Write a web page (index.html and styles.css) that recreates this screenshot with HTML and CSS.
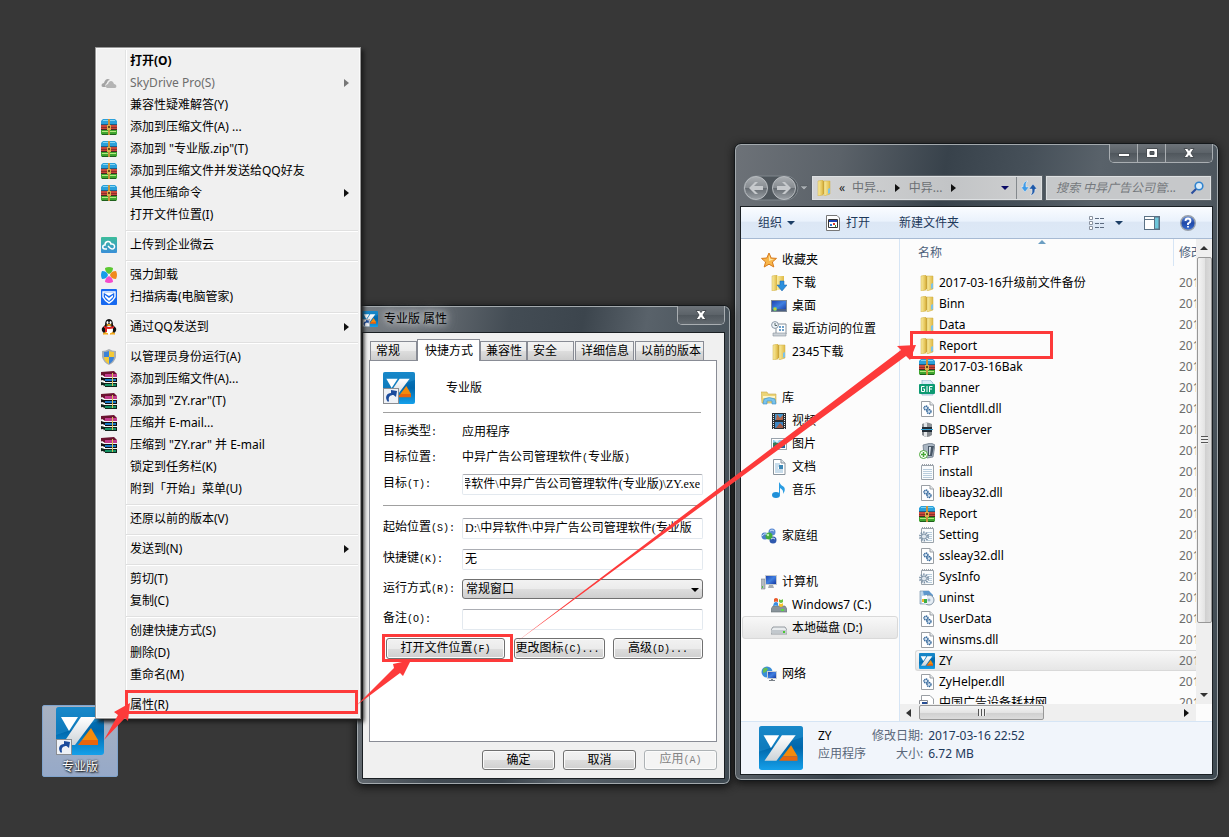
FILE: index.html
```html
<!DOCTYPE html>
<html lang="zh-CN">
<head>
<meta charset="utf-8">
<title>专业版 属性</title>
<link rel="stylesheet" href="styles.css">
</head>
<body>
<svg class="defs" aria-hidden="true">
  <defs>
    <linearGradient id="gZy" x1="0" y1="0" x2="0" y2="1"><stop offset="0" stop-color="#0d7cc0"/><stop offset=".5" stop-color="#0067ab"/><stop offset="1" stop-color="#15a0ea"/></linearGradient>
    <linearGradient id="gWhite" x1="0" y1="0" x2="0" y2="1"><stop offset="0" stop-color="#fff"/><stop offset="1" stop-color="#cdd3d8"/></linearGradient>
    <linearGradient id="gFold" x1="0" y1="0" x2="1" y2="0"><stop offset="0" stop-color="#faeda0"/><stop offset="1" stop-color="#dfb945"/></linearGradient>
    <linearGradient id="gOrb" x1="0" y1="0" x2="0" y2="1"><stop offset="0" stop-color="#a9adb1"/><stop offset=".48" stop-color="#888d92"/><stop offset=".52" stop-color="#666c72"/><stop offset="1" stop-color="#9ca1a6"/></linearGradient>
    <linearGradient id="gScreen" x1="0" y1="0" x2="1" y2="1"><stop offset="0" stop-color="#1c3fae"/><stop offset=".5" stop-color="#3f7fe0"/><stop offset="1" stop-color="#12319a"/></linearGradient>
    <linearGradient id="gHelp" x1="0" y1="0" x2="0" y2="1"><stop offset="0" stop-color="#6b93df"/><stop offset=".5" stop-color="#1f48a8"/><stop offset="1" stop-color="#3a6fd0"/></linearGradient>
    <linearGradient id="gCloud" x1="0" y1="0" x2="0" y2="1"><stop offset="0" stop-color="#3dbd9b"/><stop offset="1" stop-color="#3a8fd8"/></linearGradient>
  </defs>
  <symbol id="zy" viewBox="0 0 48 48">
    <rect width="48" height="48" rx="3" fill="url(#gZy)"/>
    <path d="M0 28Q24 20 48 12V3Q48 0 45 0H3Q0 0 0 3Z" fill="#2fa0dc" opacity=".35"/>
    <path d="M5 10H22L13 24Z" fill="#fff"/><path d="M25 10H40L19 38H6Z" fill="url(#gWhite)"/>
    <path d="M35 21L42 33H26Z" fill="#f48a0c"/><path d="M26 33H42V38H22Z" fill="#e8650d"/>
  </symbol>
  <symbol id="shortcut" viewBox="0 0 16 16"><rect x=".5" y=".5" width="15" height="15" fill="#eef1f6" stroke="#8a8d92"/><path d="M5 14C1 9 4 5 8 5V2L14 3L13 9L10.500 7C7 7 5 9 6 13Z" fill="#1b4b9c"/></symbol>
  <symbol id="zip" viewBox="0 0 16 16">
    <path d="M2 0H14L16 2V6H0V2Z" fill="#2aa0da"/><path d="M2 1H14V2H2Z" fill="#7fd4f4"/><path d="M0 5H16V6H0Z" fill="#1d5f86"/>
    <path d="M0 6H16V10H0Z" fill="#c9473a"/><path d="M0 8H16V9H0Z" fill="#8f2f2a"/><path d="M0 10H16V11H0Z" fill="#4a2a22"/>
    <path d="M0 11H16V15L15 16H1L0 15Z" fill="#3fa52f"/><path d="M1 12H15V13H1Z" fill="#b4ea80"/><path d="M1 15H15V16H1Z" fill="#1f5f1d"/>
    <path d="M7 0H9V16H7Z" fill="#c8933c"/><path d="M6 6H10V11H6Z" fill="#ddb04c"/><path d="M7 7H9V9H7Z" fill="#6a4a18"/>
  </symbol>
  <symbol id="rar" viewBox="0 0 16 16">
    <path d="M0 1L13 0L16 3V5L3 6L0 4Z" fill="#6b1330"/><path d="M4 3H16V6H4Z" fill="#c23b8c"/><path d="M0 6L4 7H16V11H4L0 9Z" fill="#111"/><path d="M4 8H15V10H4Z" fill="#1877c4"/><path d="M0 11L4 12H16V16H4L0 14Z" fill="#10231b"/><path d="M4 13H15V15H4Z" fill="#159264"/><path d="M1 4L4 6V7L1 6ZM1 9L4 10V12L1 10ZM1 14L4 15V16L1 15Z" fill="#fff"/><path d="M11 2H12V15H11Z" fill="#d7c057"/>
  </symbol>
  <symbol id="clouds" viewBox="0 0 16 16"><path d="M2 12C0 12 0 8 3 8C4 4 7 3 9 5C7 5 6 7 6 8C4 9 4 11 5 12Z" fill="#a3a3a3"/><path d="M6 13C4 12 5 9 7 9C8 5 12 5 13 9C16 9 16 13 14 13Z" fill="#b4b4b4"/></symbol>
  <symbol id="weiyun" viewBox="0 0 16 16"><rect width="16" height="16" rx="1" fill="url(#gCloud)"/><path d="M6 12H4C1 12 1 8 4 8C4 4 9 3 10 7C14 6 15 12 11 12C9 12 8 10 7 9" fill="none" stroke="#fff" stroke-width="1.500"/></symbol>
  <symbol id="clover" viewBox="0 0 16 16"><path d="M4 1Q8-1 12 1Q12 5 8 7Q4 5 4 1Z" fill="#5cc832"/><path d="M1 4Q-1 8 1 12Q6 12 7 8Q6 4 1 4Z" fill="#179de8"/><path d="M15 4Q17 8 15 12Q10 12 9 8Q10 4 15 4Z" fill="#f08a1d"/><path d="M4 15Q8 17 12 15Q12 11 8 9Q4 11 4 15Z" fill="#f34bcb"/></symbol>
  <symbol id="guard" viewBox="0 0 16 16"><rect width="16" height="16" rx="1" fill="#1769f0"/><path d="M2 3H14V8Q12 12 8 14Q4 12 2 8Z" fill="none" stroke="#fff" stroke-width="1.400"/><path d="M3 4H13L8 7Z" fill="#fff"/><path d="M4 6L8 9L12 6V8L8 12L4 8Z" fill="#fff"/></symbol>
  <symbol id="qq" viewBox="0 0 16 16"><path d="M3 14Q0 12 1 9L4 6Q4 0 8 0Q12 0 12 6L15 9Q16 12 13 14Z" fill="#111"/><ellipse cx="8" cy="11" rx="4" ry="4" fill="#fff"/><path d="M3 7Q8 9 13 7V9Q8 11 3 9Z" fill="#e02020"/><path d="M4 9H6V13H4Z" fill="#e02020"/><ellipse cx="6.500" cy="3.500" rx="1" ry="1.500" fill="#fff"/><ellipse cx="9.500" cy="3.500" rx="1" ry="1.500" fill="#fff"/><path d="M5 6Q8 4 11 6Q8 8 5 6Z" fill="#f5a91b"/><path d="M2 15Q4 12 7 15ZM9 15Q12 12 14 15Z" fill="#f5a91b" stroke="#f5a91b"/></symbol>
  <symbol id="uac" viewBox="0 0 16 16"><path d="M8 0Q11 2 15 2V8Q14 13 8 16Q2 13 1 8V2Q5 2 8 0Z" fill="#a8adb2"/><path d="M8 2V8H3V3Q6 3 8 2Z" fill="#3c82d8"/><path d="M8 2V8H13V3Q10 3 8 2Z" fill="#f4c935"/><path d="M8 8V15Q3 12 3 8Z" fill="#f4c935"/><path d="M8 8V15Q13 12 13 8Z" fill="#3c82d8"/></symbol>
  <symbol id="folder" viewBox="0 0 16 16"><path d="M2 1L7 0V15L2 16Z" fill="url(#gFold)" stroke="#cfae45" stroke-width=".5"/><path d="M7 1H11V14H7Z" fill="#c9a238"/><path d="M8 1L14 1V14L8 16Z" fill="url(#gFold)" stroke="#cfae45" stroke-width=".5"/><path d="M12 9L14 8V13L12 14Z" fill="#7cc2e8"/></symbol>
  <symbol id="star" viewBox="0 0 16 16"><path d="M8 1L10.200 6L15.500 6.400L11.400 10L12.800 15L8 12.200L3.200 15L4.600 10L.5 6.400L5.800 6Z" fill="#f8b64a" stroke="#d67a1d"/><path d="M8 3L9.400 7L13 7.300L8 9Z" fill="#fde6a6"/></symbol>
  <symbol id="download" viewBox="0 0 16 16"><path d="M1 1L6 0V15L1 16Z" fill="url(#gFold)" stroke="#cfae45" stroke-width=".5"/><path d="M6 1L13 1V14L6 15Z" fill="url(#gFold)"/><path d="M9 6H13V10H16L11 16L6 10H9Z" fill="#2b8fdd" stroke="#1763ad" stroke-width=".5"/></symbol>
  <symbol id="desktopico" viewBox="0 0 16 16"><rect x=".5" y="2.500" width="15" height="11" fill="url(#gScreen)" stroke="#7d8794"/><path d="M1 11H15V13H1Z" fill="#4a5f86"/><circle cx="4" cy="11" r="2" fill="#76d36b"/><circle cx="4" cy="11" r="1" fill="#f2c330"/></symbol>
  <symbol id="recent" viewBox="0 0 16 16"><path d="M5 3H15V13H5Z" fill="#fff" stroke="#87919a"/><path d="M8 5H10V7H8ZM11 5H13V7H11ZM8 8H10V10H8ZM11 8H13V10H11Z" fill="#6b9ec8"/><path d="M2 12H15V15H2Z" fill="#ccd2d7" stroke="#87919a" stroke-width=".6"/><circle cx="4" cy="4" r="3.400" fill="#eef3f8" stroke="#8b98a5"/><path d="M4 2V4.500H6" fill="none" stroke="#566"/></symbol>
  <symbol id="library" viewBox="0 0 16 16"><path d="M0 2H6L7 4H15V13H1Z" fill="#ecd477" stroke="#c9a94a" stroke-width=".6"/><path d="M2 6H14V8H2Z" fill="#fdf5c9"/><path d="M3 9Q8 6 14 9L15 14H11V11H6V14H2Z" fill="#78c3ee" stroke="#3c8dc4" stroke-width=".6"/></symbol>
  <symbol id="video" viewBox="0 0 16 16"><rect x="1" y="0" width="14" height="16" fill="#2a2e33"/><path d="M4 1H12V7H4Z" fill="#4597cf"/><path d="M4 9H12V15H4Z" fill="#3c86c4"/><path d="M6 1L9 5L12 2V7H5Z" fill="#b1654a"/><path d="M5 15L9 10L12 13V15Z" fill="#a25c48"/><path d="M2.500 1V16M13.500 1V16" stroke="#e6ebef" stroke-width="1" stroke-dasharray="1 1"/></symbol>
  <symbol id="picture" viewBox="0 0 16 16"><rect x=".5" y="2.500" width="15" height="11" fill="#fff" stroke="#99a3ac"/><path d="M2 4H14V12H2Z" fill="#8dcbea"/><path d="M2 7Q6 5 9 9L14 8V12H2Z" fill="#347a58"/><path d="M3 4H8L6 7Z" fill="#fff" opacity=".7"/><path d="M2 10H14V12H2Z" fill="#2560a0"/></symbol>
  <symbol id="document" viewBox="0 0 16 16"><path d="M2.500.5H10L14 4V15.500H2.500Z" fill="#fff" stroke="#89939c"/><path d="M10 .5V4H14" fill="#dde4ea" stroke="#89939c"/><path d="M4 5H9M4 7H9M4 9H7M4 11H12M4 13H12" stroke="#91b9d6"/><path d="M8 6H12V10H8Z" fill="#3d87b5"/></symbol>
  <symbol id="music" viewBox="0 0 16 16"><ellipse cx="5" cy="13" rx="4" ry="3" fill="#2090d8"/><path d="M8 13V0Q10 4 13 5Q15 8 12 12Q13 8 9 6V13Z" fill="#2b9de2"/></symbol>
  <symbol id="homegroup" viewBox="0 0 16 16"><circle cx="4" cy="8" r="3.500" fill="#4a7fc9"/><circle cx="11" cy="4" r="3.500" fill="#5a8ad4"/><circle cx="12" cy="12" r="3.500" fill="#2f59ae"/><circle cx="8" cy="8" r="3.500" fill="#43ab3d"/><path d="M1 8Q3 5 6 6M9 3Q11 1 13 3M10 11Q12 9 14 11" stroke="#cfe0f7" fill="none"/><circle cx="7" cy="7" r="1.200" fill="#b9eeb0"/></symbol>
  <symbol id="computer" viewBox="0 0 16 16"><path d="M0 5H4V15H0Z" fill="#b4bac0" stroke="#80878e" stroke-width=".6"/><path d="M1 12H2V14H1Z" fill="#54c044"/><rect x="4.500" y="1.500" width="11" height="9" fill="url(#gScreen)" stroke="#c5cace"/><path d="M8 11H12L13 14H7Z" fill="#a6acb2"/></symbol>
  <symbol id="windrive" viewBox="0 0 16 16"><path d="M2 9H14L16 12V15H0V12Z" fill="#89949b" stroke="#646e75" stroke-width=".6"/><path d="M10 12H13V14H10Z" fill="#5bdc45"/><path d="M3 2Q5 0 7 2V5Q5 4 3 5Z" fill="#ea5b2d"/><path d="M8 2Q10 4 12 2V5Q10 7 8 5Z" fill="#6cc242"/><path d="M3 6Q5 4 7 6V9Q5 8 2 9Z" fill="#3a8ee0"/><path d="M8 6Q10 8 12 6V9Q10 11 8 9Z" fill="#f8c42c"/></symbol>
  <symbol id="drive" viewBox="0 0 16 16"><path d="M2 7H14L16 10V14H0V10Z" fill="#e8ebed" stroke="#7f878e" stroke-width=".8"/><path d="M1 10H15V13H1Z" fill="#c2c8cd"/><path d="M12 11H14V13H12Z" fill="#49c832"/></symbol>
  <symbol id="network" viewBox="0 0 16 16"><circle cx="6" cy="6" r="5.500" fill="#3b8ed8"/><path d="M2 3Q5 0 7 3L5 6L2 7ZM7 8L10 7L8 11Z" fill="#65bd55"/><rect x="6.500" y="5.500" width="9" height="7" fill="url(#gScreen)" stroke="#c9d0d6"/><path d="M10 13H12V14H14V15H8V14H10Z" fill="#7a8188"/></symbol>
  <symbol id="gif" viewBox="0 0 16 16"><path d="M3 0H11L14 3V15H3Z" fill="#d9eaf6" stroke="#8db0c9" stroke-width=".7"/><rect y="4" width="16" height="10" rx="1" fill="#0d9a72"/><path d="M5.500 6.500H2.500V11.500H5.500V9H4M8 6V12M13.500 6.500H10.500V12M10.500 9H13" fill="none" stroke="#fff"/></symbol>
  <symbol id="dll" viewBox="0 0 16 16"><path d="M2.500.5H11L14.500 4V15.500H2.500Z" fill="#fff" stroke="#9a9fa4"/><path d="M11 .5V4H14.500" fill="#e6e9ec" stroke="#9a9fa4"/><circle cx="7" cy="7" r="2" fill="#cfe0ef" stroke="#2f6398" stroke-width="1.400" stroke-dasharray="1.200 .5"/><circle cx="10" cy="10.500" r="2" fill="#cfe0ef" stroke="#2f6398" stroke-width="1.400" stroke-dasharray="1.200 .5"/></symbol>
  <symbol id="db" viewBox="0 0 16 16"><path d="M3 2Q8-1 13 2V5H3Z" fill="#8e9397"/><path d="M5 1H8V5H5Z" fill="#e2e5e8"/><path d="M3 5H13V10H3Z" fill="#202b35"/><path d="M2 7H14V8H2Z" fill="#39a3d6"/><path d="M3 10H13V13Q8 17 3 13Z" fill="#868b90"/><path d="M5 10H8V15L5 14Z" fill="#e2e5e8"/></symbol>
  <symbol id="ftp" viewBox="0 0 16 16"><path d="M4 2L12 0L16 2L14 14L8 15L5 12Z" fill="#a9b5c2" stroke="#5f6d7c" stroke-width=".7"/><path d="M9 3L15 3L13 13L9 13Z" fill="#475666"/><path d="M10 4H12L11 12H10Z" fill="#d4dde6"/><circle cx="4.500" cy="11.500" r="4" fill="#fff" stroke="#4ca83b"/><path d="M4.500 9V14M2 11.500H7" stroke="#45a834" stroke-width="1.500"/></symbol>
  <symbol id="note" viewBox="0 0 16 16"><path d="M2.500 1.500H14.500V15.500H2.500Z" fill="#fafcfd" stroke="#9aa3aa"/><path d="M3 1H14" stroke="#9aa1a8" stroke-width="2" stroke-dasharray="1 1"/><path d="M4 5.500H13M4 7.500H13M4 9.500H13M4 11.500H13M4 13.500H13" stroke="#b9cddc"/></symbol>
  <symbol id="ini" viewBox="0 0 16 16"><path d="M2.500 1.500H14.500V15.500H2.500Z" fill="#fafcfd" stroke="#9aa3aa"/><path d="M3 1H14" stroke="#9aa1a8" stroke-width="2" stroke-dasharray="1 1"/><path d="M8 5.500H13M9 7.500H13M9 9.500H13M9 11.500H13M8 13.500H13" stroke="#b9cddc"/><circle cx="5" cy="9.500" r="4" fill="none" stroke="#7d93a8" stroke-width="2" stroke-dasharray="1.500 1"/><circle cx="5" cy="9.500" r="2.500" fill="#dfe7ee" stroke="#7d93a8"/></symbol>
  <symbol id="uninst" viewBox="0 0 16 16"><path d="M1 1H10V14H1Z" fill="#bdd5ea" stroke="#7e98b0" stroke-width=".7"/><path d="M4 1H10L14 5V12H6Z" fill="#5d97cc"/><circle cx="10" cy="10" r="5" fill="#e5edf4" stroke="#8294a5"/><circle cx="10" cy="10" r="1.500" fill="#9cb4ca"/><path d="M3 6L8 5V14L3 13Z" fill="#fff"/><path d="M5 9H8V13H5Z" fill="#3cae49"/><path d="M3 9H5V12H3Z" fill="#f1b52a"/></symbol>
  <symbol id="url" viewBox="0 0 16 16"><path d="M2.500.5H11L14.500 4V15.500H2.500Z" fill="#fff" stroke="#9a9fa4"/><path d="M.5 5.500H8.500V15H.5Z" fill="#fff" stroke="#8a8d92"/><path d="M3 7H8V12L6 10L3 12Z" fill="#274d94"/></symbol>
  <symbol id="appwin" viewBox="0 0 16 16"><path d="M1.500.5H12L14.500 3V15.500H1.500Z" fill="#fff" stroke="#777"/><path d="M3.500 4.500H12.500V12.500H3.500Z" fill="#fff" stroke="#333"/><path d="M4 5H12V7H4Z" fill="#1d42b0"/><path d="M5 9H7V11H5Z" fill="#2a7bd0"/><path d="M8 8H10V10H8Z" fill="#d93b2b"/><path d="M10 10H11V12H10Z" fill="#3b9a3b"/></symbol>
</svg>

<main class="desktop">

  <figure class="shortcut-tile">
    <span class="zy-icon zy-48"><svg class="logo"><use href="#zy"/></svg><svg class="link-arrow"><use href="#shortcut"/></svg></span>
    <figcaption>专业版</figcaption>
  </figure>

  <section class="window explorer" aria-label="文件资源管理器">
    <header class="explorer-caption">
      <div class="caption-buttons">
        <button type="button" class="cap" aria-label="最小化"><svg viewBox="0 0 14 12"><rect x="1.500" y="6.500" width="11" height="3" fill="#fff" stroke="#4a4f54"/></svg></button>
        <button type="button" class="cap" aria-label="最大化"><svg viewBox="0 0 14 12"><path d="M1.500 1.500H12.500V10.500H1.500ZM5 4.500V7.500H9V4.500Z" fill="#fff" stroke="#4a4f54" fill-rule="evenodd"/></svg></button>
        <button type="button" class="cap cap-close" aria-label="关闭"><svg viewBox="0 0 14 12"><path d="M2 1.500H5.500L7 3.500L8.500 1.500H12L9 6L12 10.500H8.500L7 8.500L5.500 10.500H2L5 6Z" fill="#fff" stroke="#4a4f54"/></svg></button>
      </div>
    </header>
    <div class="nav-row">
      <div class="orbs">
        <svg viewBox="0 0 66 26">
          <rect x="1" y="1" width="54" height="24" rx="12" fill="#4f565c" stroke="#7e858b"/>
          <circle cx="13" cy="13" r="11.500" fill="url(#gOrb)" stroke="#b8bcc0"/><circle cx="41" cy="13" r="11.500" fill="url(#gOrb)" stroke="#b8bcc0"/>
          <path d="M6 13L12 7H15L11 11H20V15H11L15 19H12Z" fill="#c6c9cc"/><path d="M48 13L42 7H39L43 11H34V15H43L39 19H42Z" fill="#c6c9cc"/>
          <path d="M57 11H65L61 15Z" fill="#a9aeb3" stroke="#4a5157" stroke-width=".5"/>
        </svg>
      </div>
      <div class="address">
        <svg class="ico"><use href="#folder"/></svg>
        <span class="dim">«</span><span class="crumb">中异...</span><i class="tri-r"></i><span class="crumb">中异...</span><i class="tri-r"></i>
        <i class="tri-d push"></i>
        <button type="button" class="refresh" aria-label="刷新"><svg viewBox="0 0 16 16"><path d="M7 1Q4 2 5 7H8L4 12L0 7H2Q2 1 7 1Z" fill="#3f9be8" stroke="#fff" stroke-width=".4"/><path d="M9 15Q12 14 11 9H8L12 4L16 9H14Q14 15 9 15Z" fill="#1f59a8" stroke="#fff" stroke-width=".4"/></svg></button>
      </div>
      <div class="search">
        <input type="text" aria-label="搜索" placeholder="搜索 中异广告公司管...">
        <svg viewBox="0 0 14 14"><circle cx="9" cy="5" r="3.800" fill="#d9ecfa" stroke="#2f83cf" stroke-width="1.600"/><path d="M6 8L1.500 12.500" stroke="#2b4f9e" stroke-width="2.200"/></svg>
      </div>
    </div>

    <div class="explorer-client">
      <div class="toolbar">
        <button type="button" class="t-org">组织<i class="tri-d"></i></button>
        <button type="button" class="t-open"><svg class="ico"><use href="#appwin"/></svg>打开</button>
        <button type="button" class="t-new">新建文件夹</button>
        <button type="button" class="t-view" aria-label="视图"><svg viewBox="0 0 16 14"><path d="M.5.5H3.500V3.500H.5ZM.5 5.500H3.500V8.500H.5ZM.5 10.500H3.500V13.500H.5Z" fill="#fff" stroke="#8a93a0"/><path d="M6 2.500H15M6 7.500H15M6 11.500H15" stroke="#5c6b80" stroke-dasharray="4 1"/></svg><i class="tri-d"></i></button>
        <button type="button" class="t-pane" aria-label="预览窗格"><svg viewBox="0 0 16 14"><rect x=".5" y=".5" width="15" height="13" fill="#fff" stroke="#5b7184"/><path d="M1 3.500H10" stroke="#5b7184"/><rect x="10.500" y="1" width="4.500" height="12" fill="#6fc6da" stroke="#5b7184"/></svg></button>
        <button type="button" class="t-help" aria-label="帮助"><svg viewBox="0 0 16 16"><circle cx="8" cy="8" r="7.300" fill="url(#gHelp)" stroke="#9aa2ac" stroke-width="1.400"/><path d="M5.500 6Q5.500 3.500 8 3.500Q10.500 3.500 10.500 6Q10.500 7.500 8 8.500V10M8 11V12.500" fill="none" stroke="#fff" stroke-width="1.800"/></svg></button>
      </div>

      <div class="explorer-body">
        <nav class="tree">
          <ul>
            <li><svg class="ico"><use href="#star"/></svg>收藏夹</li>
            <li class="sub"><svg class="ico"><use href="#download"/></svg>下载</li>
            <li class="sub"><svg class="ico"><use href="#desktopico"/></svg>桌面</li>
            <li class="sub"><svg class="ico"><use href="#recent"/></svg>最近访问的位置</li>
            <li class="sub"><svg class="ico"><use href="#folder"/></svg>2345下载</li>
          </ul>
          <ul>
            <li><svg class="ico"><use href="#library"/></svg>库</li>
            <li class="sub"><svg class="ico"><use href="#video"/></svg>视频</li>
            <li class="sub"><svg class="ico"><use href="#picture"/></svg>图片</li>
            <li class="sub"><svg class="ico"><use href="#document"/></svg>文档</li>
            <li class="sub"><svg class="ico"><use href="#music"/></svg>音乐</li>
          </ul>
          <ul><li><svg class="ico"><use href="#homegroup"/></svg>家庭组</li></ul>
          <ul>
            <li><svg class="ico"><use href="#computer"/></svg>计算机</li>
            <li class="sub"><svg class="ico"><use href="#windrive"/></svg>Windows7 (C:)</li>
            <li class="sub current"><svg class="ico"><use href="#drive"/></svg>本地磁盘 (D:)</li>
          </ul>
          <ul><li><svg class="ico"><use href="#network"/></svg>网络</li></ul>
        </nav>

        <div class="files">
          <div class="files-view">
            <table>
              <thead><tr><th class="name">名称<i class="sort"></i></th><th class="date">修改日期</th></tr></thead>
              <tbody>
                <tr><td><svg class="ico"><use href="#folder"/></svg>2017-03-16升级前文件备份</td><td>2017/3/16</td></tr>
                <tr><td><svg class="ico"><use href="#folder"/></svg>Binn</td><td>2017/3/16</td></tr>
                <tr><td><svg class="ico"><use href="#folder"/></svg>Data</td><td>2017/3/16</td></tr>
                <tr><td><svg class="ico"><use href="#folder"/></svg>Report</td><td>2017/3/16</td></tr>
                <tr><td><svg class="ico"><use href="#zip"/></svg>2017-03-16Bak</td><td>2017/3/16</td></tr>
                <tr><td><svg class="ico"><use href="#gif"/></svg>banner</td><td>2017/3/16</td></tr>
                <tr><td><svg class="ico"><use href="#dll"/></svg>Clientdll.dll</td><td>2017/3/16</td></tr>
                <tr><td><svg class="ico"><use href="#db"/></svg>DBServer</td><td>2017/3/16</td></tr>
                <tr><td><svg class="ico"><use href="#ftp"/></svg>FTP</td><td>2017/3/16</td></tr>
                <tr><td><svg class="ico"><use href="#note"/></svg>install</td><td>2017/3/16</td></tr>
                <tr><td><svg class="ico"><use href="#dll"/></svg>libeay32.dll</td><td>2017/3/16</td></tr>
                <tr><td><svg class="ico"><use href="#zip"/></svg>Report</td><td>2017/3/16</td></tr>
                <tr><td><svg class="ico"><use href="#ini"/></svg>Setting</td><td>2017/3/16</td></tr>
                <tr><td><svg class="ico"><use href="#dll"/></svg>ssleay32.dll</td><td>2017/3/16</td></tr>
                <tr><td><svg class="ico"><use href="#ini"/></svg>SysInfo</td><td>2017/3/16</td></tr>
                <tr><td><svg class="ico"><use href="#uninst"/></svg>uninst</td><td>2017/3/16</td></tr>
                <tr><td><svg class="ico"><use href="#dll"/></svg>UserData</td><td>2017/3/16</td></tr>
                <tr><td><svg class="ico"><use href="#dll"/></svg>winsms.dll</td><td>2017/3/16</td></tr>
                <tr class="current"><td><svg class="ico"><use href="#zy"/></svg>ZY</td><td>2017/3/16</td></tr>
                <tr><td><svg class="ico"><use href="#dll"/></svg>ZyHelper.dll</td><td>2017/3/16</td></tr>
                <tr><td><svg class="ico"><use href="#url"/></svg>中国广告设备耗材网</td><td>2017/3/16</td></tr>
              </tbody>
            </table>
          </div>
          <div class="vbar"><i class="tri-u"></i><span class="thumb"><b></b></span><i class="tri-d"></i></div>
          <div class="hbar"><i class="tri-l"></i><span class="thumb"><b></b></span><i class="tri-r"></i></div>
        </div>
      </div>

      <footer class="details">
        <span class="zy-icon zy-44"><svg class="logo"><use href="#zy"/></svg></span>
        <div class="d-name"><span class="ink">ZY</span><span>应用程序</span></div>
        <dl><dt>修改日期:</dt><dd>2017-03-16 22:52</dd><dt>大小:</dt><dd>6.72 MB</dd></dl>
      </footer>
    </div>
  </section>

  <section class="window dialog" aria-label="专业版 属性">
    <header class="dialog-caption">
      <span class="zy-icon zy-16"><svg class="logo"><use href="#zy"/></svg><svg class="link-arrow"><use href="#shortcut"/></svg></span>
      <h1>专业版 属性</h1>
      <div class="caption-buttons">
        <button type="button" class="cap cap-only" aria-label="关闭"><svg viewBox="0 0 14 12"><path d="M2 1.500H5.500L7 3.500L8.500 1.500H12L9 6L12 10.500H8.500L7 8.500L5.500 10.500H2L5 6Z" fill="#fff" stroke="#4a4f54"/></svg></button>
      </div>
    </header>
    <form class="dialog-client">
      <div class="tabs" role="tablist">
        <button type="button" role="tab" class="w46">常规</button>
        <button type="button" role="tab" class="w63 active" aria-selected="true">快捷方式</button>
        <button type="button" role="tab" class="w46">兼容性</button>
        <button type="button" role="tab" class="w46">安全</button>
        <button type="button" role="tab" class="w59 gap">详细信息</button>
        <button type="button" role="tab" class="w69 gap">以前的版本</button>
      </div>
      <div class="page">
        <div class="head"><span class="zy-icon zy-32"><svg class="logo"><use href="#zy"/></svg><svg class="link-arrow"><use href="#shortcut"/></svg></span><span>专业版</span></div>
        <hr class="rule-a">
        <div class="row r26"><span class="lab">目标类型<kbd>:</kbd></span><span>应用程序</span></div>
        <div class="row r26"><span class="lab">目标位置<kbd>:</kbd></span><span>中异广告公司管理软件<kbd>(</kbd>专业版<kbd>)</kbd></span></div>
        <div class="row r26"><label class="lab" for="target">目标<kbd>(T):</kbd></label><input id="target" type="text" value="D:\中异软件\中异广告公司管理软件(专业版)\ZY.exe"></div>
        <hr class="rule-b">
        <div class="row r32"><label class="lab" for="start">起始位置<kbd>(S):</kbd></label><input id="start" type="text" value="D:\中异软件\中异广告公司管理软件(专业版"></div>
        <div class="row r30"><label class="lab" for="key">快捷键<kbd>(K):</kbd></label><input id="key" type="text" value="无"></div>
        <div class="row r30"><label class="lab" for="run">运行方式<kbd>(R):</kbd></label><span class="select-wrap"><select id="run"><option>常规窗口</option></select><i class="tri-d"></i></span></div>
        <div class="row r30"><label class="lab" for="memo">备注<kbd>(O):</kbd></label><input id="memo" type="text"></div>
        <div class="actions">
          <button type="button" class="btn b-open">打开文件位置<kbd>(F)</kbd></button>
          <button type="button" class="btn b-icon">更改图标<kbd>(C)...</kbd></button>
          <button type="button" class="btn b-adv">高级<kbd>(D)...</kbd></button>
        </div>
      </div>
      <div class="dialog-footer">
        <button type="button" class="btn">确定</button>
        <button type="button" class="btn">取消</button>
        <button type="button" class="btn" disabled>应用<kbd>(A)</kbd></button>
      </div>
    </form>
  </section>

  <div class="menu" role="menu">
    <div class="group">
      <button type="button" role="menuitem" class="strong"><span class="gut"></span>打开(O)</button>
      <button type="button" role="menuitem" class="off"><span class="gut"><svg class="ico"><use href="#clouds"/></svg></span>SkyDrive Pro(S)<i class="tri-r"></i></button>
      <button type="button" role="menuitem"><span class="gut"></span>兼容性疑难解答(Y)</button>
      <button type="button" role="menuitem"><span class="gut"><svg class="ico"><use href="#zip"/></svg></span>添加到压缩文件(A) ...</button>
      <button type="button" role="menuitem"><span class="gut"><svg class="ico"><use href="#zip"/></svg></span>添加到 "专业版.zip"(T)</button>
      <button type="button" role="menuitem"><span class="gut"><svg class="ico"><use href="#zip"/></svg></span>添加到压缩文件并发送给QQ好友</button>
      <button type="button" role="menuitem"><span class="gut"><svg class="ico"><use href="#zip"/></svg></span>其他压缩命令<i class="tri-r"></i></button>
      <button type="button" role="menuitem"><span class="gut"></span>打开文件位置(I)</button>
    </div>
    <div class="group"><button type="button" role="menuitem"><span class="gut"><svg class="ico"><use href="#weiyun"/></svg></span>上传到企业微云</button></div>
    <div class="group">
      <button type="button" role="menuitem"><span class="gut"><svg class="ico"><use href="#clover"/></svg></span>强力卸载</button>
      <button type="button" role="menuitem"><span class="gut"><svg class="ico"><use href="#guard"/></svg></span>扫描病毒(电脑管家)</button>
    </div>
    <div class="group"><button type="button" role="menuitem"><span class="gut"><svg class="ico"><use href="#qq"/></svg></span>通过QQ发送到<i class="tri-r"></i></button></div>
    <div class="group">
      <button type="button" role="menuitem"><span class="gut"><svg class="ico"><use href="#uac"/></svg></span>以管理员身份运行(A)</button>
      <button type="button" role="menuitem"><span class="gut"><svg class="ico"><use href="#rar"/></svg></span>添加到压缩文件(A)...</button>
      <button type="button" role="menuitem"><span class="gut"><svg class="ico"><use href="#rar"/></svg></span>添加到 "ZY.rar"(T)</button>
      <button type="button" role="menuitem"><span class="gut"><svg class="ico"><use href="#rar"/></svg></span>压缩并 E-mail...</button>
      <button type="button" role="menuitem"><span class="gut"><svg class="ico"><use href="#rar"/></svg></span>压缩到 "ZY.rar" 并 E-mail</button>
      <button type="button" role="menuitem"><span class="gut"></span>锁定到任务栏(K)</button>
      <button type="button" role="menuitem"><span class="gut"></span>附到「开始」菜单(U)</button>
    </div>
    <div class="group"><button type="button" role="menuitem"><span class="gut"></span>还原以前的版本(V)</button></div>
    <div class="group"><button type="button" role="menuitem"><span class="gut"></span>发送到(N)<i class="tri-r"></i></button></div>
    <div class="group">
      <button type="button" role="menuitem"><span class="gut"></span>剪切(T)</button>
      <button type="button" role="menuitem"><span class="gut"></span>复制(C)</button>
    </div>
    <div class="group">
      <button type="button" role="menuitem"><span class="gut"></span>创建快捷方式(S)</button>
      <button type="button" role="menuitem"><span class="gut"></span>删除(D)</button>
      <button type="button" role="menuitem"><span class="gut"></span>重命名(M)</button>
    </div>
    <div class="group"><button type="button" role="menuitem"><span class="gut"></span>属性(R)</button></div>
  </div>

  <svg class="marks" width="1229" height="837" aria-hidden="true">
    <g fill="none" stroke="#fd3a3a" stroke-width="3">
      <rect x="126.500" y="691.500" width="230" height="21"/>
      <rect x="383.500" y="635.500" width="128" height="25"/>
      <rect x="911.500" y="332.500" width="140" height="25"/>
    </g>
    <g fill="#fd3a3a">
      <path d="M104 740L118 715L114 712L130 703L128 721L125 718Z"/>
      <path d="M357 705L394 668L393 664L411 660L403 676L400 673Z"/>
      <path d="M515 643L901 350L897 346L916 345L910 360L906 356Z"/>
    </g>
  </svg>
</main>
<script src="main.js"></script>
</body>
</html>
```

FILE: styles.css
```css
* { box-sizing: border-box; }

body {
  margin: 0;
  background: #373737;
  color: #000;
  font: 12px/16px "Noto Sans", "Noto Sans CJK SC", sans-serif;
}

button, input, select { font: inherit; color: inherit; margin: 0; }
button { padding: 0; border: 0; background: none; text-align: left; }
ul, dl, dd, figure, h1 { margin: 0; padding: 0; }
ul { list-style: none; }
svg { display: block; flex: none; }
i { flex: none; }

.defs { position: absolute; width: 0; height: 0; }
.ico { width: 16px; height: 16px; }

.desktop { position: relative; min-height: 100vh; overflow: hidden; }

.tri-r { border: 4px solid transparent; border-left: 5px solid #111; border-right: 0; }
.tri-l { border: 4px solid transparent; border-right: 5px solid #333; border-left: 0; }
.tri-d { border: 4px solid transparent; border-top: 4px solid #1c3f66; border-bottom: 0; }
.tri-u { border: 4px solid transparent; border-bottom: 4px solid #333; border-top: 0; }

/* logo */
.zy-icon { position: relative; display: block; flex: none; }
.logo { width: 100%; height: 100%; }
.link-arrow { position: absolute; left: 0; bottom: 0; }
.zy-48 { width: 48px; height: 48px; }
.zy-48 .link-arrow, .zy-32 .link-arrow { width: 16px; height: 16px; }
.zy-44 { width: 44px; height: 44px; }
.zy-32 { width: 32px; height: 32px; }
.zy-16 { width: 16px; height: 16px; }
.zy-16 .link-arrow { width: 8px; height: 8px; }

/* desktop shortcut */
.shortcut-tile {
  position: absolute;
  left: 42px;
  top: 705px;
  width: 76px;
  display: flex;
  flex-direction: column;
  align-items: center;
  gap: 4px;
  padding: 1px 0;
  border: 1px solid #7fa3cc;
  border-radius: 2px;
  background: linear-gradient(#a8b2c2, #96a9c8);
  color: #fff;
  text-shadow: 1px 1px 2px #000, 0 0 2px #000;
}

/* window frame */
.window {
  position: absolute;
  border: 1px solid #14181b;
  border-radius: 7px;
  box-shadow: inset 0 0 0 1px #a3a9ad, 0 2px 8px #111;
}

.caption-buttons {
  display: flex;
  border: 1px solid #a9aeb2;
  border-top: 0;
  border-radius: 0 0 5px 5px;
  overflow: hidden;
}
.cap {
  width: 28px;
  height: 18px;
  display: flex;
  align-items: center;
  justify-content: center;
  border-right: 1px solid #a9aeb2;
  background: linear-gradient(#6d7379, #5b6268 50%, #50575d 52%, #62696f);
}
.cap svg { width: 14px; height: 12px; }
.cap:last-child { border-right: 0; }
.cap-close, .cap-only { width: 46px; }

/* explorer */
.explorer {
  left: 734px;
  top: 143px;
  width: 485px;
  padding: 0 5px;
  padding-bottom: 5px;
  background: linear-gradient(100deg, #6d7278 0, #5b6269 18%, #38424b 36%, #465059 50%, #59626a 62%, #4e575f 80%, #3f4a52 100%);
}
.explorer-caption { display: flex; justify-content: flex-end; height: 32px; align-items: flex-start; }
.nav-row { display: flex; align-items: center; height: 24px; margin-bottom: 6px; padding-right: 2px; gap: 4px; }
.orbs { width: 68px; padding-left: 3px; }
.orbs svg { width: 66px; height: 26px; }
.address, .search {
  display: flex;
  align-items: center;
  height: 24px;
  border: 1px solid #dde0e2;
  outline: 1px solid #5a6167;
  background: #c6c8ca;
  color: #54585c;
}
.address { flex: 1; padding-left: 3px; gap: 7px; background: linear-gradient(90deg, #d3d4d5, #c2c4c6 60%, #cfd0d1); }
.address .tri-r { margin: 0 2px; }
.address .crumb { color: #6c7074; }
.address .dim { color: #222; }
.address .tri-d { border-top-color: #0b0b66; }
.push { margin-left: auto; }
.refresh { height: 22px; width: 25px; padding-left: 4px; border-left: 1px solid #84898d; display: flex; align-items: center; }
.refresh svg { width: 16px; height: 16px; }
.search { width: 165px; padding: 0 6px 0 9px; }
.search input { flex: 1; min-width: 0; border: 0; padding: 0; background: none; outline: 0; font-style: italic; }
.search input::placeholder { color: #75797d; opacity: 1; }
.search svg { width: 14px; height: 14px; }

.explorer-client { border: 1px solid #1a1f23; background: #fcfcfc; }

.toolbar {
  display: flex;
  align-items: center;
  height: 32px;
  padding: 0 16px 0 17px;
  border-bottom: 1px solid #a7bad3;
  background: linear-gradient(#fafcff, #eaf2fc 45%, #dce7f5 50%, #dde9f7);
  color: #1e395b;
}
.toolbar button { display: flex; align-items: center; gap: 5px; }
.t-org { margin-right: 30px; }
.t-open { margin-right: 29px; }
.t-view { margin-left: auto; margin-right: 21px; }
.t-pane { margin-right: 20px; }
.toolbar .t-view { gap: 10px; }
.t-view svg, .t-pane svg { width: 16px; height: 14px; }
.t-help svg { width: 16px; height: 16px; }

.explorer-body { display: flex; height: 482px; }
.tree { width: 159px; padding-top: 9px; border-right: 1px solid #d6e5f5; }
.tree ul { margin-bottom: 23px; }
.tree li { display: flex; align-items: center; gap: 5px; height: 23px; padding-left: 20px; white-space: nowrap; }
.tree .sub { padding-left: 30px; }
.tree .current {
  margin: 0 1px;
  padding-left: 28px;
  border: 1px solid #d9d9d9;
  border-radius: 3px;
  background: linear-gradient(#f8f8f8, #e6e6e6);
}

.files { flex: 1; min-width: 0; display: grid; grid-template: 465px 17px / 1fr 16px; }
.files-view { overflow: hidden; padding-left: 15px; }
table { width: 100%; border-collapse: separate; border-spacing: 0; table-layout: fixed; }
th { height: 33px; padding: 0 0 6px; font-weight: 400; text-align: left; color: #4c607a; overflow: hidden; white-space: nowrap; }
.name { position: relative; padding-left: 3px; }
.date { width: 23px; padding-left: 6px; background: linear-gradient(#d6e5f5, #d6e5f5) 0 0 / 1px 27px no-repeat; }
.sort { position: absolute; left: 123px; top: 1px; border: 4px solid transparent; border-bottom: 4px solid #6b9ec2; border-top: 0; }
td { height: 21px; padding: 0 0 0 6px; white-space: nowrap; overflow: hidden; color: #6d6d6d; }
td:first-child { display: flex; align-items: center; gap: 4px; padding-left: 3px; color: #000; border: 1px solid transparent; border-right: 0; }
.current td { border-top: 1px solid #d9d9d9; border-bottom: 1px solid #d9d9d9; background: linear-gradient(#f8f8f8, #e6e6e6); }
.current td:first-child { border-color: #d9d9d9; border-radius: 3px 0 0 3px; }

.vbar, .hbar { display: flex; align-items: center; background: #efefef; }
.vbar { flex-direction: column; padding: 7px 0; }
.vbar .tri-d { margin-top: auto; border-top-color: #333; }
.hbar { padding: 0 7px 0 6px; }
.hbar .tri-r { margin-left: auto; }
.thumb { display: flex; align-items: center; justify-content: center; border: 1px solid #979797; border-radius: 2px; }
.vbar .thumb { width: 15px; height: 366px; margin-top: 7px; background: linear-gradient(90deg, #f4f4f4, #e4e4e4 50%, #cfcfcf 52%, #dcdcdc); }
.hbar .thumb { width: 125px; height: 15px; margin-left: 8px; background: linear-gradient(#f4f4f4, #e4e4e4 50%, #cfcfcf 52%, #dcdcdc); }
.vbar b { width: 7px; height: 8px; background: repeating-linear-gradient(#555 0 1px, #eee 1px 3px); }
.hbar b { width: 8px; height: 7px; background: repeating-linear-gradient(90deg, #555 0 1px, #eee 1px 3px); }

.details {
  display: flex;
  align-items: center;
  height: 53px;
  padding: 0 18px;
  border-top: 1px solid #d6e5f5;
  background: #f1f5fb;
  color: #5a6779;
  line-height: 18px;
}
.details .d-name { display: flex; flex-direction: column; margin: 0 6px 6px 15px; }
.ink { color: #000; }
.details dl { display: grid; grid-template-columns: auto auto; column-gap: 5px; margin-bottom: 6px; }
.details dt { text-align: right; }
.details dd { color: #1e395b; }

/* properties dialog */
.dialog {
  left: 356px;
  top: 305px;
  width: 375px;
  padding: 0 5px;
  padding-bottom: 5px;
  background: linear-gradient(100deg, #797e83 0, #6b7177 14%, #434c54 34%, #3c454d 50%, #59626a 64%, #4a545c 80%, #3f4a52 100%);
}
.dialog, .dialog input, .dialog select, .dialog button { font-family: "Liberation Serif", "Noto Sans CJK SC", serif; }
.dialog-caption { display: flex; align-items: center; height: 26px; gap: 6px; }
.dialog-caption h1 {
  font: 12px/16px "Noto Sans", "Noto Sans CJK SC", sans-serif;
  text-shadow: 0 0 6px #c8ccd0, 0 0 10px #c8ccd0, 0 0 14px #b0b4b8;
}
.dialog-caption .caption-buttons { margin-left: auto; align-self: flex-start; }
.dialog-client { border: 1px solid #1a1f23; background: #f0f0f0; padding: 6px 7px 8px 6px; }
kbd { font: 10px/16px "Liberation Mono", monospace; }

.tabs { display: flex; align-items: flex-end; padding-left: 1px; height: 21px; }
.tabs button {
  height: 19px;
  border: 1px solid #898c95;
  border-bottom: 0;
  background: linear-gradient(#f3f3f3, #ebebeb 50%, #dddddd 52%, #cdcdcd);
  padding-left: 5px;
  white-space: nowrap;
}
.tabs .active { height: 22px; margin-bottom: -1px; position: relative; background: #fff; padding-left: 7px; }
.tabs .w46 { width: 47px; }
.tabs .w63 { width: 63px; }
.tabs .w59 { width: 59px; }
.tabs .w69 { width: 69px; }
.tabs .gap { margin-left: 1px; }

.page { border: 1px solid #898c95; background: #fff; padding: 11px 13px 82px; }
.head { display: flex; align-items: center; gap: 31px; }
.page hr { border: 0; border-top: 1px solid #a0a0a0; margin: 0 2px 0 0; }
.page .rule-a { margin-top: 8px; margin-bottom: 6px; }
.page .rule-b { margin-top: 8px; margin-bottom: 6px; }
.row { display: flex; align-items: center; }
.row > :last-child { flex: 1; min-width: 0; }
.lab { width: 79px; flex: none; }
.r26 { height: 26px; }
.r30 { height: 30px; }
.r32 { height: 32px; }
.page input { height: 21px; padding: 0 2px 2px; border: 1px solid #e3e9ef; border-top-color: #abadb3; border-radius: 2px; background: #fff; }
.select-wrap { position: relative; display: block; }
.select-wrap .tri-d { position: absolute; right: 4px; top: 9px; border-top-color: #000; }
select { appearance: none; display: block; width: 100%; }
select, .btn {
  height: 20px;
  padding: 0 3px;
  border: 1px solid #707070;
  border-radius: 3px;
  background: linear-gradient(#f2f2f2, #ebebeb 50%, #dddddd 52%, #cfcfcf);
  line-height: 16px;
}
.btn { width: 73px; text-align: center; white-space: nowrap; overflow: hidden; box-shadow: inset 0 0 0 1px #fbfbfb; }
.btn:disabled { color: #838383; border-color: #adb2b5; background: #f4f4f4; }
.actions { display: flex; justify-content: space-between; margin: 4px 0 0 3px; }
.actions .b-open { width: 119px; }
.actions .b-icon { width: 91px; padding: 0 1px; text-align: left; }
.actions .b-adv { width: 90px; }
.actions .btn { height: 21px; }
.dialog-footer { display: flex; justify-content: flex-end; gap: 8px; padding-top: 8px; }

/* context menu */
.menu {
  position: absolute;
  left: 95px;
  top: 47px;
  width: 266px;
  padding: 2px;
  border: 1px solid #979797;
  background-color: #f0f0f0;
  background-image: linear-gradient(90deg, #f1f1f1 0 27px, #e2e3e3 27px 28px, #fff 28px 29px, #f0f0f0 29px);
  background-origin: content-box;
  background-repeat: no-repeat;
  box-shadow: inset 0 0 0 1px #fafafa, 3px 3px 4px #1c1c1c;
}
.group + .group { padding-top: 8px; background: linear-gradient(#e0e0e0 0 1px, #fff 1px 2px) 28px 4px / 100% 2px no-repeat; }
.menu button { display: flex; align-items: center; width: 100%; height: 22px; padding-right: 9px; white-space: pre; }
.menu .gut { width: 32px; padding-left: 3px; flex: none; }
.menu .tri-r { margin-left: auto; }
.menu .strong { font-weight: 700; }
.menu .off { color: #6d6d6d; }
.off .tri-r { border-left-color: #777; }

/* annotations */
.marks { position: absolute; left: 0; top: 0; pointer-events: none; }
```

FILE: main.js
```js
// Show the end of the long target path, as the text box does after focus.
const target = document.getElementById('target');
target.scrollLeft = target.scrollWidth;
```
